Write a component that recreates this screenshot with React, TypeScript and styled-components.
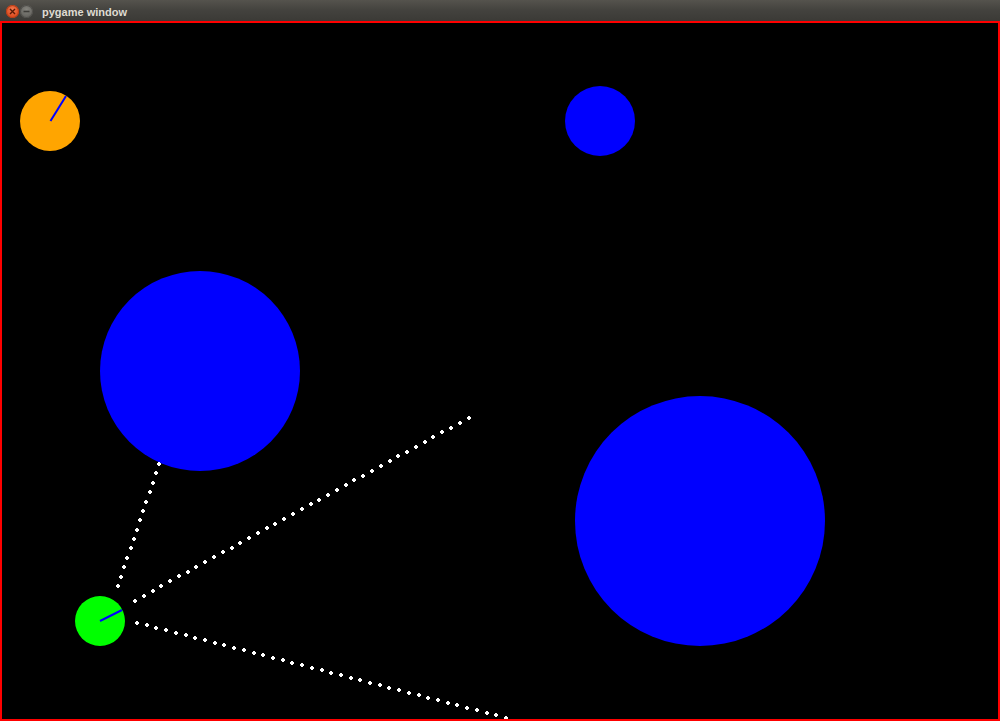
import React from "react";
import styled, { createGlobalStyle } from "styled-components";

const Global = createGlobalStyle`
  html, body { margin: 0; padding: 0; background: #000; overflow: hidden; }
  #root { width: 1000px; height: 721px; }
`;

const Window = styled.div`
  width: 1000px;
  height: 721px;
  display: flex;
  flex-direction: column;
  background: #000;
`;

const TitleBar = styled.div`
  height: 21px;
  flex: none;
  display: flex;
  align-items: center;
  padding-left: 6px;
  padding-top: 1px;
  gap: 1px;
  background: linear-gradient(#55534d, #43423e 50%, #3b3a36);
  box-sizing: border-box;
`;

const WinButton = styled.div<{ $kind: "close" | "min" }>`
  width: 13px;
  height: 13px;
  border-radius: 50%;
  flex: none;
  display: flex;
  align-items: center;
  justify-content: center;
  background: ${(p) =>
    p.$kind === "close"
      ? "radial-gradient(circle at 50% 35%, #f27a50, #dc4a1e 70%)"
      : "radial-gradient(circle at 50% 35%, #85847e, #64635e 70%)"};
  box-shadow: inset 0 0 0 1px ${(p) => (p.$kind === "close" ? "#b63d17" : "#4f4e4a")};
`;

const Title = styled.span`
  margin-left: 8px;
  font-family: "Liberation Sans", "DejaVu Sans", sans-serif;
  font-weight: bold;
  font-size: 11px;
  color: #dfdbd2;
  line-height: 20px;
  padding-top: 1px;
`;

const Canvas = styled.div`
  flex: 1;
  border: 2px solid #ff0000;
  background: #000;
  overflow: hidden;
  display: flex;
`;

const Scene = styled.svg`
  display: block;
  width: 996px;
  height: 696px;
`;

type Pt = [number, number];

const rays: { from: Pt; to: Pt; n: number }[] = [
  { from: [118, 586], to: [159, 464], n: 13 },
  { from: [135, 600.5], to: [468.5, 418], n: 38 },
  { from: [137, 623], to: [506, 717.5], n: 38 },
];

function Dot({ x, y }: { x: number; y: number }) {
  const cx = Math.round(x);
  const cy = Math.round(y);
  return (
    <g fill="#ffffff">
      <rect x={cx - 2} y={cy - 1} width={4} height={2} />
      <rect x={cx - 1} y={cy - 2} width={2} height={4} />
    </g>
  );
}

export default function App() {
  return (
    <>
      <Global />
      <Window>
        <TitleBar>
          <WinButton $kind="close">
            <svg width="7" height="7" viewBox="0 0 7 7">
              <path d="M1 1 L6 6 M6 1 L1 6" stroke="#5a1a06" strokeWidth="1.4" />
            </svg>
          </WinButton>
          <WinButton $kind="min">
            <svg width="7" height="7" viewBox="0 0 7 7">
              <path d="M0.5 3.5 L6.5 3.5" stroke="#3e3d39" strokeWidth="1.6" />
            </svg>
          </WinButton>
          <Title>pygame window</Title>
        </TitleBar>
        <Canvas>
          <Scene viewBox="2 23 996 696" shapeRendering="crispEdges">
            <circle cx={50} cy={121} r={30} fill="#ffa500" shapeRendering="auto" />
            <line x1={50.5} y1={121} x2={66} y2={96} stroke="#0000ff" strokeWidth={2} shapeRendering="auto" />
            <circle cx={600} cy={121} r={35} fill="#0000ff" shapeRendering="auto" />
            <circle cx={200} cy={371} r={100} fill="#0000ff" shapeRendering="auto" />
            <circle cx={700} cy={521} r={125} fill="#0000ff" shapeRendering="auto" />
            <circle cx={100} cy={621} r={25} fill="#00ff00" shapeRendering="auto" />
            <line x1={100} y1={621} x2={122} y2={610} stroke="#0000ff" strokeWidth={2} shapeRendering="auto" />
            {rays.map((r, i) =>
              Array.from({ length: r.n + 1 }, (_, k) => {
                const t = k / r.n;
                const x = r.from[0] + (r.to[0] - r.from[0]) * t;
                const y = r.from[1] + (r.to[1] - r.from[1]) * t;
                return <Dot key={`${i}-${k}`} x={x} y={y} />;
              })
            )}
          </Scene>
        </Canvas>
      </Window>
    </>
  );
}
